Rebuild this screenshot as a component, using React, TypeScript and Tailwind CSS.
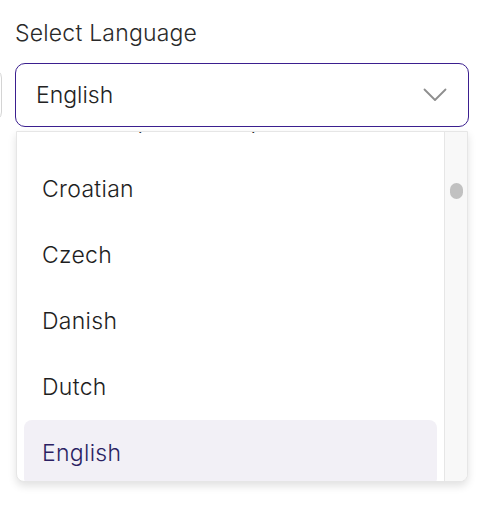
import React from "react";

const languages = ["Chinese (Traditional)", "Croatian", "Czech", "Danish", "Dutch", "English"];

export default function App() {
  const selected = "English";

  return (
    <div className="w-[484px] h-[512px] bg-white overflow-hidden font-['Inter',sans-serif] font-light">
      <div className="pt-[18px] pl-[15px] text-[23px] leading-[30px] text-[#2a2a2a] tracking-[0.2px]">Select Language</div>

      <div className="flex items-center mt-[15px]">
        {/* neighbour field, mostly off screen */}
        <div className="-ml-[100px] w-[102px] h-[54px] border border-[#d4d4d4] rounded-[10px] shrink-0" />
        <div className="ml-[13px] w-[454px] h-[64px] border-[1.5px] border-[#3b1f8f] rounded-[10px] flex items-center justify-between pl-[20px] pr-[21px]">
          <span className="text-[23px] text-[#232323]">{selected}</span>
          <svg width="24" height="14" viewBox="0 0 24 14" fill="none">
            <path d="M1.5 1.5 L12 12 L22.5 1.5" stroke="#8e8e8e" strokeWidth="1.8" strokeLinecap="round" strokeLinejoin="round" />
          </svg>
        </div>
      </div>

      {/* open menu */}
      <div className="ml-[16px] mt-[4px] w-[452px] h-[351px] border border-[#e6e6e6] rounded-b-[8px] shadow-[0_4px_8px_rgba(0,0,0,0.12)] flex overflow-hidden bg-white">
        <div className="flex-1 overflow-hidden">
          <ul className="-mt-[42px] px-[7px]">
            {languages.map((lang, i) => (
              <li
                key={lang}
                className={
                  lang === selected
                    ? "h-[66px] flex items-center pl-[18px] rounded-[8px] bg-[#f2f0f6] text-[#2b1f63] text-[23px] tracking-[0.3px]"
                    : i === 0
                      ? "h-[66px] flex items-center pl-[18px] pb-[2px] text-[#1e1e1e] text-[23px] tracking-[-0.2px]"
                      : "h-[66px] flex items-center pl-[18px] text-[#1e1e1e] text-[23px] tracking-[0.3px]"
                }
              >
                {lang}
              </li>
            ))}
          </ul>
        </div>
        <div className="w-[23px] bg-[#f8f8f8] border-l border-[#e6e6e6] pt-[51px] flex justify-center">
          <div className="w-[13px] h-[16px] rounded-full bg-[#c1c1c1]" />
        </div>
      </div>
    </div>
  );
}
